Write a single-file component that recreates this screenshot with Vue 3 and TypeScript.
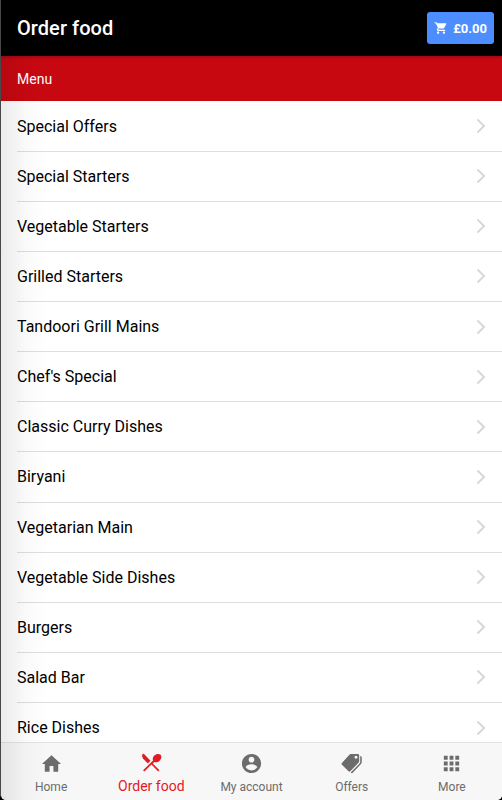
<script setup lang="ts">
interface Tab {
  label: string
  paths: string[]
  active?: boolean
}

const categories: string[] = [
  'Special Offers',
  'Special Starters',
  'Vegetable Starters',
  'Grilled Starters',
  'Tandoori Grill Mains',
  "Chef's Special",
  'Classic Curry Dishes',
  'Biryani',
  'Vegetarian Main',
  'Vegetable Side Dishes',
  'Burgers',
  'Salad Bar',
  'Rice Dishes',
]

const tabs: Tab[] = [
  { label: 'Home', paths: ['M10 20.500v-6h4v6h5v-8h3L12 3.500 2 12.500h3v8z'] },
  {
    label: 'Order food',
    active: true,
    paths: [
      'M8.200 13L10.900 10.300L4.200 3.200Q3.300 2.300 2.600 3.200Q1.400 5.500 3.100 7.800z',
      'M14.900 11.500c1.700.8 4 .2 5.600-1.400 2-2 2.400-4.600.9-6.100-1.600-1.500-4.500-1.200-6.400.7-1.600 1.600-2.100 3.700-1.400 5.300L3.200 20l1.300 1.300L12 14.200l7 7.100 1.300-1.300L13.300 13z',
    ],
  },
  {
    label: 'My account',
    paths: [
      'M12 2C6.480 2 2 6.480 2 12s4.480 10 10 10 10-4.480 10-10S17.520 2 12 2zm0 3c1.660 0 3 1.340 3 3s-1.340 3-3 3-3-1.340-3-3 1.340-3 3-3zm0 14.200c-2.500 0-4.710-1.280-6-3.220.03-1.990 4-3.080 6-3.080 1.990 0 5.970 1.090 6 3.080-1.290 1.940-3.500 3.220-6 3.220z',
    ],
  },
  {
    label: 'Offers',
    paths: [
      'M11.200 2h7.300Q20 2 20 3.500V9.600Q20 10.500 19.300 11.200L10.700 20.100Q9.800 21 8.900 20.100L2 13.200Q1.100 12.300 2 11.400L10 2.600Q10.500 2 11.200 2zM16.700 3.900a1.550 1.550 0 1 0 .001 0z',
      'M21.100 4.200Q22.700 4.400 22.700 5.600V10.500Q22.700 11.700 21.900 12.500L13 21.800Q12.300 22.400 11.400 21.700L11.200 21.500L20.400 11.900Q21.100 11.200 21.100 10.200z',
    ],
  },
  {
    label: 'More',
    paths: ['M4 8h4V4H4v4zm6 12h4v-4h-4v4zm-6 0h4v-4H4v4zm0-6h4v-4H4v4zm6 0h4v-4h-4v4zm6-10v4h4V4h-4zm-6 4h4V4h-4v4zm6 6h4v-4h-4v4zm0 6h4v-4h-4v4z'],
  },
]
</script>

<template>
  <div class="screen">
    <header class="toolbar">
      <h1>Order food</h1>
      <button class="cart" type="button">
        <svg viewBox="0 0 24 24">
          <path d="M7 18c-1.100 0-1.990.9-1.990 2S5.900 22 7 22s2-.9 2-2-.9-2-2-2zM1 2v2h2l3.600 7.590-1.350 2.450c-.16.280-.25.610-.25.960 0 1.100.9 2 2 2h12v-2H7.420c-.14 0-.25-.11-.25-.25l.03-.12.900-1.630h7.450c.750 0 1.410-.41 1.750-1.030l3.580-6.490A1 1 0 0 0 20 4H5.210l-.94-2H1zm16 16c-1.100 0-1.990.9-1.990 2s.890 2 1.990 2 2-.9 2-2-.9-2-2-2z" />
        </svg>
        <span>£0.00</span>
      </button>
    </header>

    <main class="content">
      <h2>Menu</h2>
      <ul>
        <li v-for="name in categories" :key="name">
          <span>{{ name }}</span>
          <svg viewBox="0 0 10 16"><path d="M1.500 1.500L8 8l-6.500 6.500" /></svg>
        </li>
      </ul>
    </main>

    <nav class="tabs">
      <a v-for="tab in tabs" :key="tab.label" class="tab" :class="{ active: tab.active }">
        <svg viewBox="0 0 24 24">
          <path v-for="d in tab.paths" :key="d" :d="d" fill-rule="evenodd" />
        </svg>
        <span>{{ tab.label }}</span>
      </a>
    </nav>
    <div class="edge-shade"></div>
  </div>
</template>

<style>
body {
  background: #000;
  overflow: hidden;
}
</style>

<style scoped>
.screen {
  position: relative;
  box-sizing: border-box;
  display: flex;
  flex-direction: column;
  width: 502px;
  height: 800px;
  border-left: 1px solid #48484a;
  border-radius: 0 0 5px 6px;
  overflow: hidden;
  background: #fff;
  font-family: Roboto, sans-serif;
  color: #000;
}

.toolbar {
  position: relative;
  z-index: 1;
  flex: none;
  display: flex;
  align-items: center;
  justify-content: space-between;
  box-sizing: border-box;
  height: 56px;
  padding: 0 8px 0 16px;
  background: #000;
  color: #fff;
  box-shadow: 0 1px 3px rgba(0, 0, 0, 0.25);
}

h1 {
  margin: 0;
  font-size: 20px;
  font-weight: 500;
  letter-spacing: 0.06px;
}

.cart {
  display: flex;
  align-items: center;
  justify-content: space-between;
  box-sizing: border-box;
  width: 67px;
  height: 32px;
  padding: 0 7px;
  border: 0;
  border-radius: 3px;
  background: #4c8dff;
  color: #fff;
  font: 700 13px Roboto, sans-serif;
}

.cart svg {
  width: 14px;
  height: 14px;
  fill: #fff;
}

.content {
  flex: 1;
  min-height: 0;
  overflow: hidden;
}

h2 {
  box-sizing: border-box;
  height: 45px;
  margin: 0;
  padding: 1px 16px 0;
  background: #c70811;
  color: #fff;
  font-size: 14px;
  font-weight: 400;
  line-height: 45px;
}

ul {
  margin: 0;
  padding: 0.500px 0 0 16px;
  list-style: none;
}

li {
  display: flex;
  align-items: center;
  justify-content: space-between;
  box-sizing: border-box;
  height: 50.130px;
  padding-right: 16px;
  border-bottom: 1px solid #dedede;
  font-size: 16px;
}

li svg {
  width: 10px;
  height: 16px;
  fill: none;
  stroke: #d8d8d8;
  stroke-width: 2;
}

.tabs {
  flex: none;
  display: flex;
  box-sizing: border-box;
  height: 58px;
  border-top: 1px solid #e3e3e3;
  background: #f7f7f7;
}

.tab {
  flex: 1;
  display: flex;
  flex-direction: column;
  align-items: center;
  padding-top: 9px;
  color: #6c6c6c;
  font-size: 12px;
  line-height: 16px;
}

.tab svg {
  width: 23px;
  height: 23px;
  margin-bottom: 4px;
  fill: currentColor;
}

.tab.active {
  padding-top: 8px;
  color: #e21b22;
  font-size: 14px;
}

.edge-shade {
  position: absolute;
  z-index: 2;
  inset: 56px auto 0 0;
  width: 46px;
  background: linear-gradient(90deg, rgba(0, 0, 0, 0.08), rgba(0, 0, 0, 0.02) 55%, transparent);
  pointer-events: none;
}
</style>
